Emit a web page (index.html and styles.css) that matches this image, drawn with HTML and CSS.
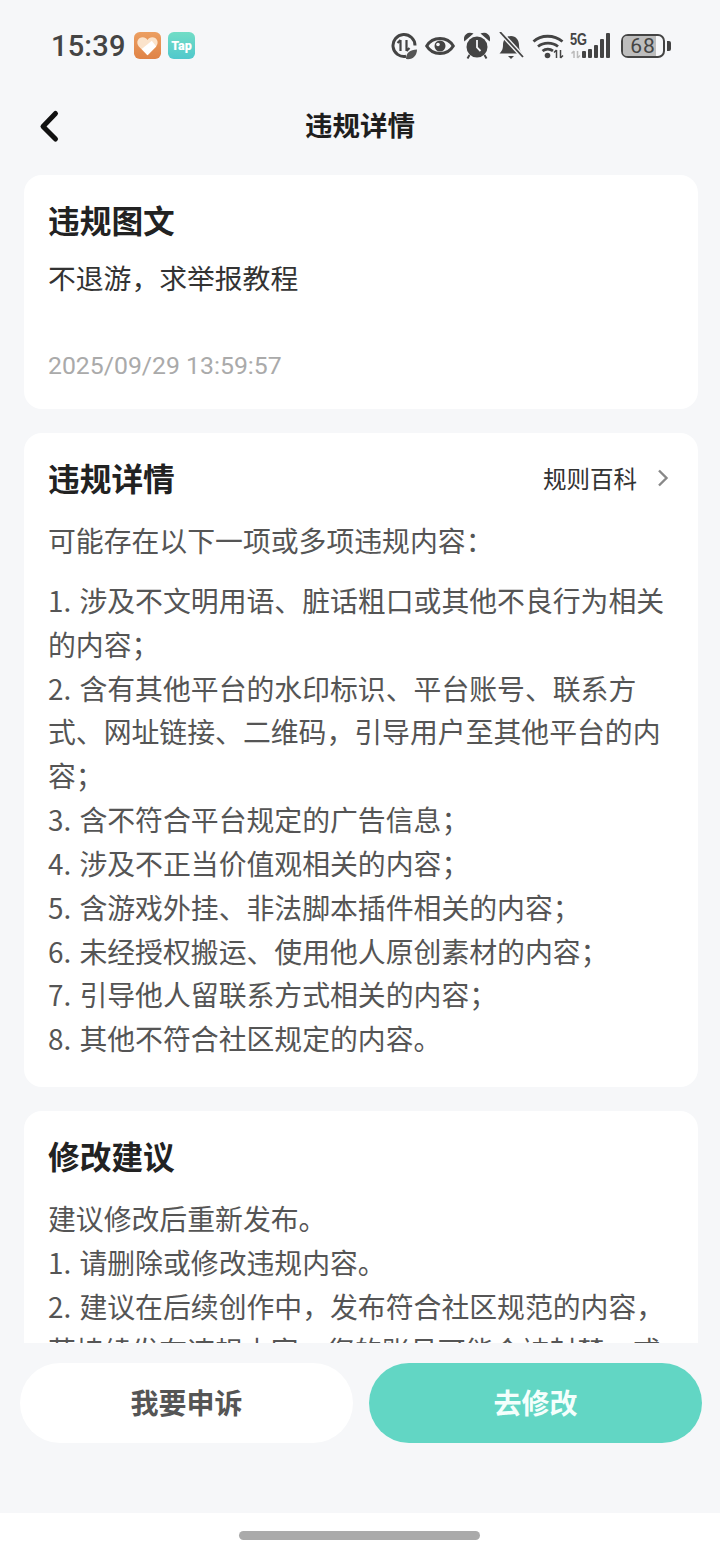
FILE: index.html
```html
<!DOCTYPE html>
<html lang="zh-CN">
<head>
<meta charset="utf-8">
<title>违规详情</title>
<link rel="stylesheet" href="styles.css">
</head>
<body>
<div class="app">
  <header class="status">
    <div class="status-left">
      <span class="time">15:39</span>
      <svg class="app-icon" viewBox="0 0 28 28"><defs><linearGradient id="o" x1="0" y1="0" x2="0" y2="1"><stop offset="0" stop-color="#ec9f62"/><stop offset="1" stop-color="#df8346"/></linearGradient></defs><rect width="28" height="28" rx="6" fill="url(#o)"/><path d="M14 24 5 15C1.500 10.500 4.500 5.500 9 5.500c2.200 0 3.800 1 5 2.800 1.200-1.800 2.800-2.800 5-2.800 4.500 0 7.500 5 4 9.500z" fill="#fbe3cb"/><path d="M14 24 8 17.500 18.500 9 23 15z" fill="#fff"/></svg>
      <svg class="app-icon" viewBox="0 0 28 28"><defs><linearGradient id="t" x1="0" y1="0" x2="0" y2="1"><stop offset="0" stop-color="#72ddc6"/><stop offset="1" stop-color="#50c8cc"/></linearGradient></defs><rect width="28" height="28" rx="6" fill="url(#t)"/><text x="14" y="18.500" class="tap">Tap</text></svg>
    </div>
    <div class="status-right">
      <svg class="si si-data" viewBox="0 0 26 28"><path d="M15 24.300A11 11 0 1 1 24 13.500" fill="none" stroke="#444" stroke-width="3"/><path d="M9.500 8v11M6.500 11 9.500 8M15.500 8v11M15.500 19l3-3" fill="none" stroke="#444" stroke-width="2.200"/><path d="M15 27c0-6 4-9.500 11-9.500 0 6-4 10.500-11 9.500z" fill="#555"/></svg>
      <svg class="si si-eye" viewBox="0 0 30 18"><path d="M1.700 9C5 3.500 9.500 1.500 15 1.500S25 3.500 28.300 9C25 14.500 20.500 16.500 15 16.500S5 14.500 1.700 9z" fill="none" stroke="#444" stroke-width="3"/><circle cx="15" cy="9" r="5.500" fill="#444"/><circle cx="13" cy="7.500" r="1.800" fill="#f6f7f9"/></svg>
      <svg class="si si-alarm" viewBox="0 0 26 28"><circle cx="13" cy="15" r="10.500" fill="#444"/><path d="M1 7.500a5 5 0 0 1 6.500-5.500zM25 7.500a5 5 0 0 0-6.500-5.500zM5.500 23l-2 3.500M20.500 23l2 3.500" fill="#444" stroke="#444" stroke-width="2"/><path d="M13 8v7.500l3.500 3.500" fill="none" stroke="#f6f7f9" stroke-width="1.800"/></svg>
      <svg class="si si-bell" viewBox="0 0 26 28"><path d="M1.500 21.500c2-2 3.500-4 3.500-8.500C5 8 8 4 13 4s8 4 8 9c0 4.500 1.500 6.500 3.500 8.500z" fill="#444"/><path d="M10 24h6l-3 3z" fill="#444"/><path d="M2 0 25 25" stroke="#f6f7f9" stroke-width="4.500"/><path d="M2 0 25 25" stroke="#444" stroke-width="1.800"/></svg>
      <svg class="si si-wifi" viewBox="0 0 32 26"><path d="M1.500 8.500C9 1.500 22 1.500 30.500 8.500M6 13.500c5.500-4.500 14.500-4.500 20 0M10.500 18c3-2.300 7.500-2.300 10.500-.2" fill="none" stroke="#444" stroke-width="2.800"/><circle cx="15.500" cy="22.500" r="2.800" fill="#444"/><path d="M24.500 17v8M22 19.500l2.500-2.500M28.500 17v8M28.500 25l2.500-2.500" fill="none" stroke="#444" stroke-width="1.500"/></svg>
      <span class="sig">
        <span class="sig-5g">5G</span>
        <svg class="si-bars" viewBox="0 0 41 28"><path d="M4 19v7M1.500 21.500 4 19M7.500 19v7M7.500 26 10 23.500" fill="none" stroke="#bbb" stroke-width="1.500"/><rect x="12" y="19" width="4" height="7" rx="1" fill="#444"/><rect x="18" y="17" width="4" height="9" rx="1" fill="#444"/><rect x="24" y="13" width="4" height="13" rx="1" fill="#444"/><rect x="30" y="7" width="4" height="19" rx="1" fill="#444"/><rect x="36" y="1" width="4" height="25" rx="1" fill="#444"/></svg>
      </span>
      <span class="battery"><span class="battery-fill"></span><span class="battery-num">68</span></span>
      <span class="battery-cap"></span>
    </div>
  </header>

  <nav class="nav">
    <svg class="back" viewBox="0 0 24 36"><path d="M18.500 6.500 6 19.500l12.500 12.500" fill="none" stroke="#111" stroke-width="5" stroke-linecap="round" stroke-linejoin="round"/></svg>
    <h1 class="nav-title">违规详情</h1>
  </nav>

  <main class="content">
    <section class="card card-post">
      <h2 class="card-title">违规图文</h2>
      <p class="post-text">不退游，求举报教程</p>
      <p class="post-date">2025/09/29 13:59:57</p>
    </section>

    <section class="card card-detail">
      <div class="card-head">
        <h2 class="card-title">违规详情</h2>
        <a class="rule-link">规则百科<svg class="chev" viewBox="0 0 12 20"><path d="M2 2.500l7.500 7.500-7.500 7.500" fill="none" stroke="#888" stroke-width="2.400"/></svg></a>
      </div>
      <p class="body-text intro">可能存在以下一项或多项违规内容：</p>
      <p class="body-text">1. 涉及不文明用语、脏话粗口或其他不良行为相关的内容；<br>2. 含有其他平台的水印标识、平台账号、联系方式、网址链接、二维码，引导用户至其他平台的内容；<br>3. 含不符合平台规定的广告信息；<br>4. 涉及不正当价值观相关的内容；<br>5. 含游戏外挂、非法脚本插件相关的内容；<br>6. 未经授权搬运、使用他人原创素材的内容；<br>7. 引导他人留联系方式相关的内容；<br>8. 其他不符合社区规定的内容。</p>
    </section>

    <section class="card">
      <h2 class="card-title">修改建议</h2>
      <p class="body-text advice">建议修改后重新发布。<br>1. 请删除或修改违规内容。<br>2. 建议在后续创作中，发布符合社区规范的内容，若持续发布违规内容，您的账号可能会被封禁，或</p>
    </section>
  </main>

  <div class="actions">
    <button class="btn btn-light">我要申诉</button>
    <button class="btn btn-primary">去修改</button>
  </div>

  <footer class="home"><span class="home-bar"></span></footer>
</div>
</body>
</html>
```

FILE: styles.css
```css
* { box-sizing: border-box; }
html, body { margin: 0; padding: 0; }
body {
  width: 720px;
  height: 1558px;
  overflow: hidden;
  background: #f6f7f9;
  font-family: "Noto Sans CJK SC", "Noto Sans", sans-serif;
}
h1, h2, p { margin: 0; }
.app { display: flex; flex-direction: column; height: 1558px; }

.status {
  height: 90px;
  flex: none;
  display: flex;
  align-items: center;
  justify-content: space-between;
  padding: 1px 49px 0 51px;
}
.status-left { display: flex; align-items: center; gap: 7px; }
.time {
  font-family: Roboto, sans-serif;
  font-size: 29px;
  font-weight: 500;
  color: #444;
  letter-spacing: 0.2px;
  margin-right: 1px;
}
.app-icon { width: 27px; height: 27px; }
.tap { font-family: Roboto, sans-serif; font-size: 13px; font-weight: 900; fill: #fff; text-anchor: middle; }
.status-right { display: flex; align-items: center; }
.si { display: block; flex: none; }
.si-data { width: 26px; height: 28px; margin-right: 8px; }
.si-eye { width: 30px; height: 18px; margin-right: 9px; }
.si-alarm { width: 26px; height: 28px; margin-right: 8px; }
.si-bell { width: 26px; height: 28px; margin-right: 8px; }
.si-wifi { width: 32px; height: 26px; margin-right: 6px; }
.sig { position: relative; display: block; width: 41px; height: 28px; margin-right: 10px; }
.sig-5g {
  position: absolute; left: 0; top: 0;
  font-family: "Liberation Sans", sans-serif;
  font-size: 16px; font-weight: 700; color: #444; line-height: 16px;
  transform: scaleX(.8);
  transform-origin: left top;
}
.si-bars { position: absolute; left: 0; top: 0; width: 41px; height: 28px; }
.battery {
  position: relative; display: block; width: 44px; height: 24px;
  border: 2.500px solid #444; border-radius: 7px;
}
.battery-fill { position: absolute; left: 0; top: 0; bottom: 0; width: 82%; background: #bdbdbd; border-radius: 4px 0 0 4px; }
.battery-num {
  position: absolute; left: 0; right: 0; top: -2px; text-align: center;
  font-family: Roboto, sans-serif; font-size: 21px; line-height: 24px; color: #444; letter-spacing: 1px;
}
.battery-cap { width: 4px; height: 10px; margin-left: 2px; background: #444; border-radius: 0 2px 2px 0; }

.nav {
  height: 70px;
  flex: none;
  position: relative;
  display: flex;
  align-items: center;
  justify-content: center;
}
.back { position: absolute; left: 37px; top: 17px; width: 24px; height: 36px; }
.nav-title { font-size: 27.500px; font-weight: 700; color: #1e1e1e; line-height: 40px; margin-bottom: 2px; }

.content {
  flex: 1;
  min-height: 0;
  overflow: hidden;
  padding: 15px 22px 0 24px;
  display: flex;
  flex-direction: column;
  gap: 24px;
}
.card { flex: none; background: #fff; border-radius: 18px; padding: 22px 24px 26px; }
.card-post { height: 234px; }
.card-detail { height: 654px; }
.card-title { font-size: 31.700px; font-weight: 700; color: #222; line-height: 44px; }
.card-head { display: flex; align-items: center; justify-content: space-between; }
.rule-link {
  display: flex; align-items: center; gap: 20px;
  font-size: 23.500px; color: #333; padding-right: 5px; margin-top: 2px;
}
.chev { width: 12px; height: 20px; }
.post-text { font-size: 27.800px; line-height: 44px; color: #333; margin-top: 14px; }
.post-date { font-family: Roboto, sans-serif; font-size: 24.800px; line-height: 30px; color: #aaa; margin-top: 52px; }
.body-text { font-size: 27.850px; line-height: 43.850px; color: #555; word-spacing: 2px; }
.intro { margin-top: 20px; margin-bottom: 16px; }
.advice { margin-top: 20px; }

.actions {
  flex: none;
  height: 170px;
  padding: 20px 18px 0 20px;
  display: flex;
  align-items: flex-start;
  gap: 16px;
  background: #f6f7f9;
}
.btn {
  flex: 1;
  height: 80px;
  border: 0;
  border-radius: 40px;
  font-family: inherit;
  font-size: 28px;
  font-weight: 700;
  padding: 0 0 2px;
}
.btn-light { background: #fff; color: #555; }
.btn-primary { background: #62d6c4; color: #f4fffc; }

.home {
  flex: none;
  height: 45px;
  background: #fff;
  display: flex;
  justify-content: center;
  padding: 18px 1px 0 0;
}
.home-bar { width: 241px; height: 9px; border-radius: 5px; background: #aaa; }
```
